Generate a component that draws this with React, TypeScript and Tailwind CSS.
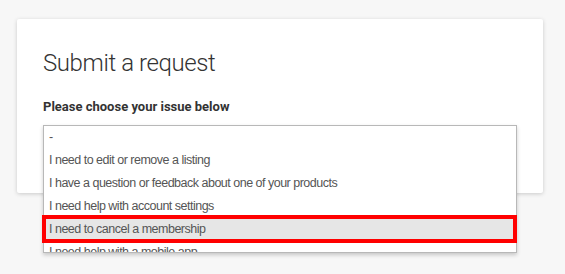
import React from "react";

const options = [
  "-",
  "I need to edit or remove a listing",
  "I have a question or feedback about one of your products",
  "I need help with account settings",
  "I need to cancel a membership",
  "I need help with a mobile app",
];

export default function App() {
  return (
    <div className="relative w-[565px] h-[274px] overflow-hidden bg-[#f7f7f7]">
      <div className="ml-[17px] mt-[19px] w-[526px] h-[174px] bg-white rounded-[2px] shadow-[0_1px_4px_rgba(0,0,0,0.18)] pl-[26px] pt-[28px]">
        <h1 className="text-[24px] leading-[32px] font-light tracking-[-0.4px] text-[#333] font-['Roboto',sans-serif]">
          Submit a request
        </h1>
        <p className="mt-[20px] text-[13px] leading-[16px] font-bold text-[#333] font-['Roboto',sans-serif]">
          Please choose your issue below
        </p>
      </div>

      <div className="absolute left-[43px] top-[125px] w-[474px] h-[128px] overflow-hidden bg-white border border-[#b8b8b8] shadow-[0_2px_4px_rgba(0,0,0,0.2)] font-['Liberation_Sans',Arial,sans-serif]">
        <ul>
          {options.map((o, i) => (
            <li
              key={o}
              className={
                i === 4
                  ? "h-[23px] leading-[23px] pl-[5px] text-[12.5px] tracking-[-0.5px] text-[#555] bg-[#e6e6e6]"
                  : "h-[23px] leading-[23px] pl-[5px] text-[12.5px] tracking-[-0.5px] text-[#555]"
              }
            >
              {o}
            </li>
          ))}
        </ul>
      </div>

      <div className="absolute left-[42px] top-[215px] w-[475px] h-[28px] border-4 border-[#ff0000]" />
    </div>
  );
}
